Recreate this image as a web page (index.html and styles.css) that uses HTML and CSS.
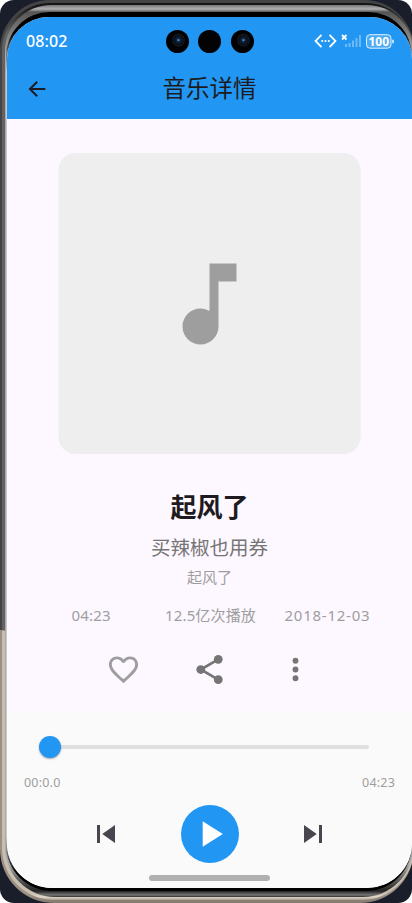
FILE: index.html
```html
<!DOCTYPE html>
<html lang="zh-CN">
<head>
<meta charset="utf-8">
<title>音乐详情</title>
<link rel="stylesheet" href="styles.css">
</head>
<body>
<div class="stage">
<div class="shell"><div class="metal"><div class="edge"><div class="bezel">
<main class="screen">
  <header class="header">
    <div class="status">
      <span class="clock">08:02</span>
      <div class="cameras"><i class="lens"></i><i class="lens plain"></i><i class="lens"></i></div>
      <svg class="indicators" width="80" height="20" viewBox="0 0 80 20">
        <g fill="none" stroke="#fff" stroke-width="1.800"><path d="M7.500 3.800 1.500 10l6 6.200M15.500 3.800l6 6.200-6 6.200"/><path d="m28 4 4.500 4.500m0-4.500-4.500 4.500"/></g>
        <g fill="#fff"><circle cx="8.200" cy="10" r="1.100"/><circle cx="11.500" cy="10" r="1.100"/><circle cx="14.800" cy="10" r="1.100"/></g>
        <g fill="#fff" opacity=".35"><path d="M31 13h2v3h-2zM34.500 12h2v4h-2zM38 9.500h2V16h-2zM41.500 7h2v9h-2zM45 4h2v12h-2z"/></g>
        <rect x="52.500" y="3.700" width="24.500" height="13.500" rx="3.500" fill="#fff" fill-opacity=".2" stroke="#fff" stroke-opacity=".85"/>
        <path d="M78.300 8.700h1.400v3.600h-1.400z" fill="#fff"/>
        <text class="battery" x="64.800" y="14.900" text-anchor="middle">100</text>
      </svg>
    </div>
    <div class="appbar">
      <svg class="back" width="24" height="24" viewBox="0 0 24 24"><path d="M20.300 11H7.330l5.590-5.590L11.500 4l-8 8 8 8 1.410-1.410L7.330 13H20.300z"/></svg>
      <h1>音乐详情</h1>
    </div>
  </header>
  <section class="detail">
    <div class="cover"><svg width="108" height="108" viewBox="0 0 24 24"><path d="M12 3v10.550c-.59-.34-1.270-.55-2-.55-2.210 0-4 1.790-4 4s1.790 4 4 4 4-1.790 4-4V7h4V3h-6z"/></svg></div>
    <h2>起风了</h2>
    <p class="artist">买辣椒也用券</p>
    <p class="album">起风了</p>
    <div class="meta"><span class="length">04:23</span><span class="plays">12.5亿次播放</span><span class="date">2018-12-03</span></div>
    <div class="actions">
      <svg width="35" height="35" viewBox="0 0 24 24" class="like"><path d="M16.500 3c-1.740 0-3.410.81-4.500 2.090C10.910 3.810 9.240 3 7.500 3 4.420 3 2 5.420 2 8.500c0 3.780 3.400 6.860 8.550 11.540L12 21.350l1.450-1.320C18.600 15.360 22 12.280 22 8.500 22 5.420 19.580 3 16.500 3zm-4.400 15.550-.1.100-.1-.1C7.140 14.240 4 11.390 4 8.500 4 6.500 5.500 5 7.500 5c1.540 0 3.040.99 3.570 2.360h1.870C13.460 5.990 14.960 5 16.500 5c2 0 3.500 1.500 3.500 3.500 0 2.890-3.140 5.740-7.900 10.050z"/></svg>
      <svg width="35" height="35" viewBox="0 0 24 24"><path d="m18 5-12 7 12 7" fill="none" stroke="#757575" stroke-width="1.800"/><circle cx="18" cy="5" r="3"/><circle cx="6" cy="12" r="3"/><circle cx="18" cy="19" r="3"/></svg>
      <svg width="35" height="35" viewBox="0 0 24 24"><circle cx="12" cy="6" r="2"/><circle cx="12" cy="12" r="2"/><circle cx="12" cy="18" r="2"/></svg>
    </div>
  </section>
  <footer class="player">
    <div class="slider"><i class="thumb"></i><i class="track"></i></div>
    <div class="times"><span>00:0.0</span><span class="total">04:23</span></div>
    <div class="controls">
      <svg width="36" height="36" viewBox="0 0 24 24"><path d="M6 6h2v12H6zm3.500 6 8.500 6V6z"/></svg>
      <div class="play"><svg width="44" height="44" viewBox="0 0 24 24"><path d="M8 5v14l11-7z"/></svg></div>
      <svg width="36" height="36" viewBox="0 0 24 24"><path d="m6 18 8.500-6L6 6v12zM16 6v12h2V6h-2z"/></svg>
    </div>
    <div class="home"></div>
  </footer>
</main>
</div></div></div></div>
</div>
</body>
</html>
```
FILE: styles.css
```css
* { box-sizing: border-box; }
body { margin: 0; background: #fff; font-family: "Noto Sans", "Noto Sans CJK SC", sans-serif; }
h1, h2, p { margin: 0; }
svg { display: block; flex: none; }
.stage { width: 412px; height: 903px; overflow: hidden; background: #1a1e2a; border-radius: 14px; }
.shell { width: 414px; height: 903px; padding: 3px 0 3px 2px; border-radius: 50px 50px 54px 54px; background: linear-gradient(#444447 0 630px, #9b9083 630px 895px, #82796f); }
.metal { height: 897px; padding: 2px 1px 3px 3px; border-radius: 48px 48px 52px 52px; background: linear-gradient(#151515 0 3px, #626262 30px 627px, #c8beb0 628px 890px, #e0d6c9 894px, #a69c8f); }
.edge { height: 892px; padding: 7px 1px 6px 1px; border-radius: 46px 46px 50px 50px; background: linear-gradient(#777 0, #b2afaf 4px, #555 7px, #aaa 50px 860px, #222 886px, #777 890px, #302d2a 892px); }
.bezel { height: 879px; padding: 5px 0 3px 1px; border-radius: 44px 44px 46px 46px; background: linear-gradient(#000 0 20px, #c9c9cb 60px 825px, #000 860px); }
.screen { width: 405px; height: 871px; overflow: hidden; border-radius: 42px 42px 45px 45px; background: #fdf7ff; display: flex; flex-direction: column; }
.header { height: 102px; flex: none; background: #2196f3; }
.status { height: 48px; display: grid; grid-template-columns: 1fr 88px 1fr; align-items: center; }
.clock { padding-left: 19px; color: #fff; font-size: 16px; font-weight: 500; letter-spacing: .1px; }
.cameras { display: flex; justify-content: space-between; }
.lens { width: 23px; height: 23px; border-radius: 50%; background: radial-gradient(circle at 54% 44%, #5c8ab5 0 .5px, #12294a 1.5px, #08101d 4px, #11151a 6px, #000 7px); }
.plain { background: #030303; }
.indicators { justify-self: end; margin-right: 18px; }
.battery { fill: #fff; font: 700 12px "Noto Sans", sans-serif; }
.appbar { height: 47px; display: grid; grid-template-columns: 60px 1fr 60px; align-items: center; }
.back { margin-left: 18px; fill: #1d1b20; }
h1 { padding-bottom: 4px; text-align: center; color: #1d1b20; font: 400 23.500px/40px "Noto Sans CJK SC", sans-serif; }
.detail { height: 593px; flex: none; padding-top: 34px; display: flex; flex-direction: column; align-items: center; color: #9e9e9e; }
.cover { width: 302px; height: 301px; flex: none; border-radius: 17px; background: #eee; display: grid; place-items: center; fill: #9e9e9e; transform: translateX(-.5px); }
h2 { margin-top: 32px; height: 40px; font: 700 26px/40px "Noto Sans CJK SC", sans-serif; color: #1d1b20; }
.artist { margin-top: 6px; height: 30px; font: 400 19.500px/30px "Noto Sans CJK SC", sans-serif; color: #757575; }
.album { margin-top: 5px; height: 20px; font: 400 15px/20px "Noto Sans CJK SC", sans-serif; }
.meta { width: 302px; height: 24px; margin-top: 16px; display: flex; line-height: 24px; font-size: 15px; white-space: nowrap; }
.length { width: 106.5px; flex: none; padding-left: 13px; letter-spacing: .2px; }
.plays { width: 119.5px; flex: none; letter-spacing: .15px; }
.date { letter-spacing: .75px; }
.actions { width: 207px; margin-top: 25px; display: flex; justify-content: space-between; fill: #757575; }
.like { fill: #9e9e9e; }
.player { flex: 1; background: #fafafa; display: flex; flex-direction: column; align-items: center; }
.slider { width: 330px; height: 24px; margin: 23px 11px 0 0; display: flex; align-items: center; }
.thumb { width: 22px; height: 22px; border-radius: 50%; background: #2196f3; box-shadow: 0 1px 2px #0005; z-index: 1; }
.track { flex: 1; height: 4px; margin-left: -2px; border-radius: 0 2px 2px 0; background: #e0e0e0; }
.times { align-self: stretch; height: 20px; margin: 14px 17px -1px 17px; display: flex; justify-content: space-between; line-height: 20px; font-size: 12.500px; letter-spacing: .2px; color: #9e9e9e; }
.controls { width: 243px; height: 58px; margin-top: 13px; display: flex; align-items: center; justify-content: space-between; fill: #49454f; }
.play { width: 58px; height: 58px; border-radius: 50%; background: #2196f3; fill: #fff; display: grid; place-items: center; }
.home { width: 121px; height: 6px; margin-top: 12px; border-radius: 3px; background: #b0b0b0; }
```
